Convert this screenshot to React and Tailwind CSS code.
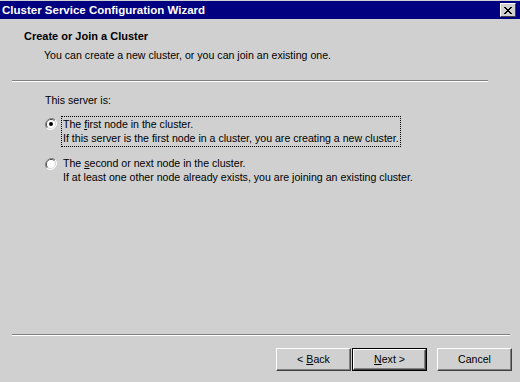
function Radio({ checked }) {
  return (
    <svg width="12" height="12" viewBox="0 0 12 12" className="shrink-0">
      <path d="M10.2 1.8 A6 6 0 0 0 1.8 10.2" fill="none" stroke="#808080" strokeWidth="1" />
      <path d="M9.5 2.5 A5 5 0 0 0 2.5 9.5" fill="none" stroke="#404040" strokeWidth="1" />
      <path d="M1.8 10.2 A6 6 0 0 0 10.2 1.8" fill="none" stroke="#ffffff" strokeWidth="1" />
      <path d="M2.5 9.5 A5 5 0 0 0 9.5 2.5" fill="none" stroke="#e0e0e0" strokeWidth="1" />
      <circle cx="6" cy="6" r="4" fill="#ffffff" />
      {checked && <circle cx="6" cy="6" r="2" fill="#000000" />}
    </svg>
  );
}

function Separator({ className }) {
  return (
    <div className={className}>
      <div className="h-px bg-[#808080]" />
      <div className="h-px bg-white" />
    </div>
  );
}

function Button({ children, isDefault }) {
  return (
    <button
      type="button"
      className={
        isDefault
          ? "h-[23px] w-[75px] border border-black bg-[#d0d0d0] p-0"
          : "h-[23px] w-[75px] bg-[#d0d0d0] p-0"
      }
    >
      <div className="flex h-full w-full items-center justify-center border-t border-l border-r border-b border-t-white border-l-white border-r-[#404040] border-b-[#404040] shadow-[inset_-1px_-1px_0_#808080] text-[10.6px]">
        {children}
      </div>
    </button>
  );
}

export default function App() {
  return (
    <div
      className="flex h-[382px] w-[520px] flex-col bg-[#d0d0d0] text-[10.6px] leading-[13px] text-black"
      style={{ fontFamily: '"Liberation Sans", Arial, sans-serif' }}
    >
      {/* Title bar */}
      <div className="mt-px flex h-[18px] items-center justify-between bg-[#000080] pl-[2px] pr-[4px]">
        <span className="text-[11.5px] font-bold text-white">
          Cluster Service Configuration Wizard
        </span>
        <div className="flex h-[14px] w-[16px] items-center justify-center border border-t-white border-l-white border-r-[#404040] border-b-[#404040] bg-[#d0d0d0]">
          <svg width="8" height="7" viewBox="0 0 8 7">
            <path d="M0 0 L7 7 M1 0 L8 7 M7 0 L0 7 M8 0 L1 7" stroke="#000" strokeWidth="1" />
          </svg>
        </div>
      </div>

      {/* Header */}
      <div className="pl-[24px] pt-[11px]">
        <div className="text-[11px] font-bold">Create or Join a Cluster</div>
        <div className="mt-[6px] pl-[20px]">
          You can create a new cluster, or you can join an existing one.
        </div>
      </div>

      <Separator className="ml-[12px] mt-[18px] w-[476px]" />

      {/* Body */}
      <div className="pl-[45px] pt-[12px]">
        <div>This server is:</div>

        <div className="mt-[9px] flex items-start">
          <div className="pt-[2px]">
            <Radio checked />
          </div>
          <div className="ml-[4px] border border-dotted border-black px-[1px] py-[1px]">
            <div>
              The <span className="underline">f</span>irst node in the cluster.
            </div>
            <div className="mt-px">
              If this server is the first node in a cluster, you are creating a new cluster.
            </div>
          </div>
        </div>

        <div className="mt-[9px] flex items-start">
          <div className="pt-[2px]">
            <Radio />
          </div>
          <div className="ml-[4px] px-[2px] py-[1px]">
            <div>
              The <span className="underline">s</span>econd or next node in the cluster.
            </div>
            <div className="mt-px">
              If at least one other node already exists, you are joining an existing cluster.
            </div>
          </div>
        </div>
      </div>

      <div className="flex-1" />

      <Separator className="ml-[12px] w-[498px]" />

      {/* Buttons */}
      <div className="flex pb-[11px] pl-[276px] pt-[12px]">
        <Button>
          &lt; <span className="ml-[3px] underline">B</span>ack
        </Button>
        <div className="ml-px">
          <Button isDefault>
            <span className="underline">N</span>ext &gt;
          </Button>
        </div>
        <div className="ml-[10px]">
          <Button>Cancel</Button>
        </div>
      </div>
    </div>
  );
}
